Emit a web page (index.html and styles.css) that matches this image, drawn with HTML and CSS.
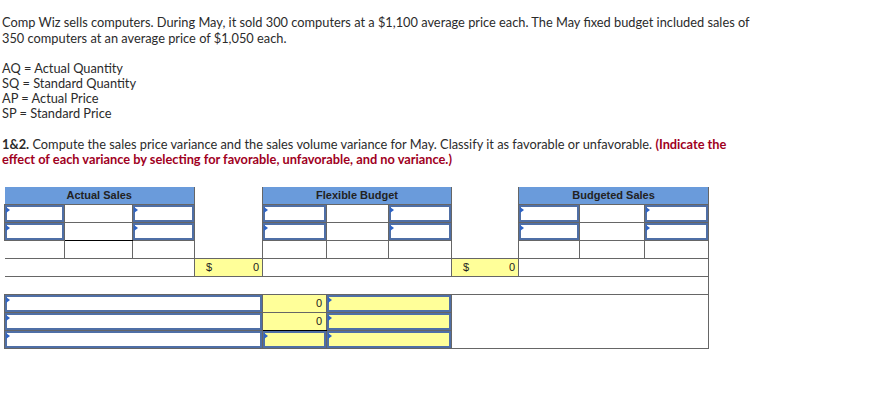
FILE: index.html
```html
<!DOCTYPE html>
<html>
<head>
<meta charset="utf-8">
<link rel="stylesheet" href="styles.css">
</head>
<body>
<p class="intro">Comp Wiz sells computers. During May, it sold 300 computers at a $1,100 average price each. The May fixed budget included sales of 350 computers at an average price of $1,050 each.</p>
<p class="defs">AQ = Actual Quantity<br>SQ = Standard Quantity<br>AP = Actual Price<br>SP = Standard Price</p>
<p class="question"><b>1&amp;2.</b> Compute the sales price variance and the sales volume variance for May. Classify it as favorable or unfavorable. <b class="note">(Indicate the effect of each variance by selecting for favorable, unfavorable, and no variance.)</b></p>

<table class="sheet">
  <colgroup>
    <col class="c60"><col class="c68"><col class="c62"><col class="c68"><col class="c64"><col class="c62"><col class="c63"><col class="c67"><col class="c61"><col class="c65"><col class="c64">
  </colgroup>
  <tr class="r-head">
    <th colspan="3" class="hd first">Actual Sales</th>
    <td class="gap"></td>
    <th colspan="3" class="hd">Flexible Budget</th>
    <td class="gap"></td>
    <th colspan="3" class="hd">Budgeted Sales</th>
  </tr>
  <tr>
    <td class="in"><div class="box"><span class="mark"></span></div></td>
    <td class="cell"></td>
    <td class="in"><div class="box"><span class="mark"></span></div></td>
    <td class="gap"></td>
    <td class="in"><div class="box"><span class="mark"></span></div></td>
    <td class="cell"></td>
    <td class="in"><div class="box"><span class="mark"></span></div></td>
    <td class="gap"></td>
    <td class="in"><div class="box"><span class="mark"></span></div></td>
    <td class="cell"></td>
    <td class="in"><div class="box"><span class="mark"></span></div></td>
  </tr>
  <tr>
    <td class="in"><div class="box"><span class="mark"></span></div></td>
    <td class="cell dark-b"></td>
    <td class="in"><div class="box"><span class="mark"></span></div></td>
    <td class="gap"></td>
    <td class="in"><div class="box"><span class="mark"></span></div></td>
    <td class="cell"></td>
    <td class="in"><div class="box"><span class="mark"></span></div></td>
    <td class="gap"></td>
    <td class="in"><div class="box"><span class="mark"></span></div></td>
    <td class="cell"></td>
    <td class="in"><div class="box"><span class="mark"></span></div></td>
  </tr>
  <tr>
    <td class="cell first"></td>
    <td class="cell dark-t"></td>
    <td class="cell"></td>
    <td class="gap"></td>
    <td class="cell"></td>
    <td class="cell"></td>
    <td class="cell"></td>
    <td class="gap"></td>
    <td class="cell"></td>
    <td class="cell"></td>
    <td class="cell"></td>
  </tr>
  <tr>
    <td colspan="3" class="cell first"></td>
    <td class="cell yel"><div class="money"><span>$</span><span>0</span></div></td>
    <td colspan="3" class="cell"></td>
    <td class="cell yel"><div class="money"><span>$</span><span>0</span></div></td>
    <td colspan="3" class="cell"></td>
  </tr>
  <tr>
    <td colspan="11" class="spacer"></td>
  </tr>
  <tr>
    <td colspan="4" class="in"><div class="box"><span class="mark"></span></div></td>
    <td class="cell yel num">0</td>
    <td colspan="2" class="in"><div class="box ybox"><span class="mark"></span></div></td>
    <td colspan="4" rowspan="3" class="cell"></td>
  </tr>
  <tr>
    <td colspan="4" class="in"><div class="box"><span class="mark"></span></div></td>
    <td class="cell yel num dark-b">0</td>
    <td colspan="2" class="in"><div class="box ybox"><span class="mark"></span></div></td>
  </tr>
  <tr>
    <td colspan="4" class="in"><div class="box"><span class="mark"></span></div></td>
    <td class="in dark-t"><div class="box ybox"><span class="mark"></span></div></td>
    <td colspan="2" class="in"><div class="box ybox"><span class="mark"></span></div></td>
  </tr>
</table>
</body>
</html>
```

FILE: styles.css
```css
body {
  margin: 0;
  padding: 0 0 0 2px;
  background: #ffffff;
  color: #2b2b2b;
  font-family: Lato, "Open Sans", sans-serif;
  font-size: 12.8px;
}

p {
  margin: 0;
}

.intro {
  padding-top: 14px;
  line-height: 16px;
  width: 760px;
}

.defs {
  margin-top: 15px;
  line-height: 15px;
}

.question {
  margin-top: 16px;
  line-height: 15px;
  width: 740px;
}

.note {
  color: #a0001e;
}

.sheet {
  margin-top: 20px;
  margin-left: 2px;
  border-collapse: collapse;
  table-layout: fixed;
  width: 704px;
  font-family: "Liberation Sans", Arial, sans-serif;
  font-size: 11px;
  color: #222222;
}

.c60 { width: 60px; }
.c61 { width: 61px; }
.c62 { width: 62px; }
.c63 { width: 63px; }
.c64 { width: 64px; }
.c65 { width: 65px; }
.c67 { width: 67px; }
.c68 { width: 68px; }

.sheet tr {
  height: 18px;
}

.sheet tr.r-head {
  height: 17px;
}

.sheet td,
.sheet th {
  padding: 0;
  line-height: 15px;
}

.hd {
  background: #6a9bdb;
  font-weight: bold;
  text-align: center;
  border-left: 1px solid #666666;
  border-right: 1px solid #666666;
}

.hd.first {
  border-left: none;
}

.gap {
  border-left: 1px solid #666666;
  border-right: 1px solid #666666;
}

.cell {
  border: 1px solid #666666;
}

.cell.first {
  border-left: none;
}

.dark-b {
  border-bottom: 1px solid #000000;
}

.dark-t {
  border-top: 1px solid #000000;
}

.yel {
  background: #ffff99;
}

.sheet td.num {
  text-align: right;
  padding-right: 4px;
}

.money {
  display: flex;
  justify-content: space-between;
  padding: 0 3px 0 11px;
}

.spacer {
  border-right: 1px solid #666666;
}

.in {
  border: 1px solid #666666;
}

.box {
  position: relative;
  height: 17px;
  box-sizing: border-box;
  border: 2px solid #4f6fa6;
  background: #ffffff;
}

.ybox {
  background: #ffff99;
}

.mark {
  position: absolute;
  left: -1px;
  top: 0;
  width: 0;
  height: 0;
  border-top: 3px solid transparent;
  border-bottom: 3px solid transparent;
  border-left: 4px solid #2e63c4;
}
```
